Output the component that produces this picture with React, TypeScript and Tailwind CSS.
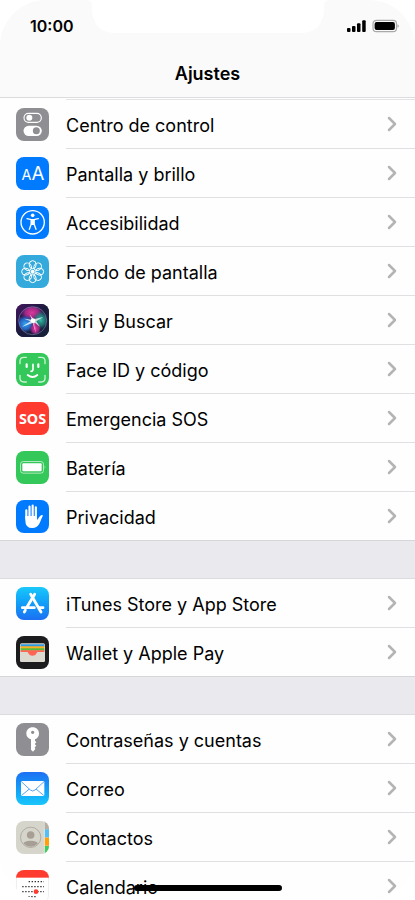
import type { ReactNode } from "react";
import { ChevronRight } from "lucide-react";

type Ajuste = {
  id: string;
  titulo: string;
  fondo: string;
  icono: ReactNode;
};

const GRUPOS: Ajuste[][] = [
  [
    { id: "centro-de-control", titulo: "Centro de control", fondo: "bg-[#8e8e93]", icono: <IconoCentro /> },
    { id: "pantalla", titulo: "Pantalla y brillo", fondo: "bg-[#007aff]", icono: <IconoPantalla /> },
    { id: "accesibilidad", titulo: "Accesibilidad", fondo: "bg-[#007aff]", icono: <IconoAccesibilidad /> },
    { id: "fondo", titulo: "Fondo de pantalla", fondo: "bg-[#34aadc]", icono: <IconoFondo /> },
    { id: "siri", titulo: "Siri y Buscar", fondo: "bg-[#1d1c3c]", icono: <IconoSiri /> },
    { id: "face-id", titulo: "Face ID y código", fondo: "bg-[#34c759]", icono: <IconoFaceId /> },
    { id: "sos", titulo: "Emergencia SOS", fondo: "bg-[#ff3b30]", icono: <IconoSos /> },
    { id: "bateria", titulo: "Batería", fondo: "bg-[#34c759]", icono: <IconoBateria /> },
    { id: "privacidad", titulo: "Privacidad", fondo: "bg-[#007aff]", icono: <IconoPrivacidad /> },
  ],
  [
    { id: "app-store", titulo: "iTunes Store y App Store", fondo: "bg-linear-to-b from-[#1ac8fb] to-[#1d6ff2]", icono: <IconoAppStore /> },
    { id: "wallet", titulo: "Wallet y Apple Pay", fondo: "bg-[#1c1c1e]", icono: <IconoWallet /> },
  ],
  [
    { id: "contrasenas", titulo: "Contraseñas y cuentas", fondo: "bg-[#8e8e93]", icono: <IconoLlave /> },
    { id: "correo", titulo: "Correo", fondo: "bg-linear-to-b from-[#1e6ff2] to-[#1ac7fb]", icono: <IconoCorreo /> },
    { id: "contactos", titulo: "Contactos", fondo: "bg-[#d5d5cb]", icono: <IconoContactos /> },
    { id: "calendario", titulo: "Calendario", fondo: "bg-white", icono: <IconoCalendario /> },
  ],
];

export default function App() {
  return (
    <div className="relative flex h-screen flex-col overflow-hidden rounded-[46px] bg-[#fefefe] font-['Inter','Liberation_Sans',sans-serif] text-black">
      <header className="relative border-b border-[#dcdcde] bg-[#fafafa]">
        <Muesca />
        <BarraEstado />
        <h1 className="flex h-[47px] items-center justify-center text-lg font-semibold">Ajustes</h1>
      </header>

      <main className="flex-1 overflow-y-auto [scrollbar-width:none]">
        {/* final de la fila anterior, bajo la cabecera */}
        <div className="ml-[66px] h-[2px] border-b border-[#e4e4e6]" />
        {GRUPOS.map((grupo, i) => (
          <section key={i}>
            {i > 0 && <div className="h-[38px] border-b border-[#dcdce0] bg-[#eae9ee]" />}
            <ul>
              {grupo.map((ajuste, j) => (
                <Fila key={ajuste.id} ajuste={ajuste} ultima={j === grupo.length - 1} />
              ))}
            </ul>
          </section>
        ))}
      </main>

      {/* indicador de inicio */}
      <div className="absolute bottom-[9px] left-1/2 h-[6px] w-[148px] -translate-x-1/2 rounded-full bg-black" />
    </div>
  );
}

function Fila({ ajuste, ultima }: { ajuste: Ajuste; ultima: boolean }) {
  return (
    <li className={ultima ? "border-b border-[#d6d6d9]" : ""}>
      <a href={`#${ajuste.id}`} className="flex items-stretch gap-[17px] pl-4">
        <span className="flex items-center">
          <span className={`block size-[33px] overflow-hidden rounded-[8px] ${ajuste.fondo}`}>{ajuste.icono}</span>
        </span>
        <span
          className={`flex flex-1 items-center justify-between pr-[11px] ${ultima ? "" : "border-b border-[#e0e0e2]"}`}
        >
          <span className="flex h-12 items-center pt-[3px] text-lg">{ajuste.titulo}</span>
          <ChevronRight size={24} strokeWidth={2.5} className="text-[#b4b4b7]" aria-hidden="true" />
        </span>
      </a>
    </li>
  );
}

function Muesca() {
  return (
    <svg
      width="244"
      height="33"
      viewBox="0 0 244 33"
      className="absolute top-0 left-1/2 -translate-x-1/2"
      aria-hidden="true"
    >
      <path d="M0 0C4 0 6 2 6 7C6 24 14 33 30 33H214C230 33 238 24 238 7C238 2 240 0 244 0Z" fill="#fff" />
    </svg>
  );
}

function BarraEstado() {
  return (
    <div className="relative flex h-[50px] items-center justify-between pt-px pr-4 pl-[30px]">
      <time className="text-base font-semibold">10:00</time>
      <svg width="52" height="14" viewBox="0 0 52 14" role="img" aria-label="Cobertura y batería">
        <rect x="0" y="9" width="3.5" height="4" rx="1" />
        <rect x="5" y="7" width="3.5" height="6" rx="1" />
        <rect x="10" y="4.2" width="3.5" height="8.8" rx="1" />
        <rect x="15.2" y="1.2" width="3.5" height="11.8" rx="1" />
        <rect x="26" y="1.3" width="23.5" height="11.4" rx="3.4" fill="none" stroke="#a9a9ab" strokeWidth="1.2" />
        <rect x="27.6" y="2.9" width="20.3" height="8.2" rx="2" />
        <path d="M50.6 5.2C52 5.6 52 8.4 50.6 8.8Z" fill="#8e8e90" />
      </svg>
    </div>
  );
}

function Lienzo({ children }: { children: ReactNode }) {
  return (
    <svg viewBox="0 0 99 99" className="size-full" fill="none" aria-hidden="true">
      {children}
    </svg>
  );
}

function IconoCentro() {
  return (
    <Lienzo>
      <rect x="24" y="16" width="52" height="27" rx="13.5" stroke="#fff" strokeWidth="3.5" />
      <circle cx="40" cy="29.5" r="9" fill="#fff" />
      <rect x="22.5" y="53" width="55" height="31" rx="15.5" fill="#fff" />
      <circle cx="61" cy="68.5" r="10.5" fill="#8e8e93" />
    </Lienzo>
  );
}

function IconoPantalla() {
  return (
    <Lienzo>
      <g fill="#fff" className="font-['Inter',sans-serif]" textAnchor="middle">
        <text x="31" y="70" fontSize="43">A</text>
        <text x="66" y="70" fontSize="56">A</text>
      </g>
    </Lienzo>
  );
}

function IconoAccesibilidad() {
  return (
    <Lienzo>
      <circle cx="50" cy="49" r="35" stroke="#fff" strokeWidth="4" />
      <circle cx="50" cy="28" r="5.5" fill="#fff" />
      <path
        d="M33 38L46 41V53L40 70M67 38L54 41V53L60 70"
        stroke="#fff"
        strokeWidth="4"
        strokeLinecap="round"
        strokeLinejoin="round"
      />
      <path d="M44 39H56V53L54 57H46L44 53Z" fill="#fff" />
    </Lienzo>
  );
}

function IconoFondo() {
  return (
    <Lienzo>
      <g stroke="#fff" strokeWidth="3">
        {[0, 45, 90, 135, 180, 225, 270, 315].map((angulo) => (
          <ellipse key={angulo} cx="50" cy="29" rx="10.5" ry="12" transform={`rotate(${angulo} 50 50)`} />
        ))}
      </g>
      <circle cx="50" cy="50" r="6" fill="#fff" />
    </Lienzo>
  );
}

function IconoSiri() {
  return (
    <Lienzo>
      <defs>
        <linearGradient id="siri-fondo" x1="0" y1="0" x2="1" y2="1">
          <stop offset="0" stopColor="#43155f" />
          <stop offset="0.5" stopColor="#1b1b3d" />
          <stop offset="1" stopColor="#172238" />
        </linearGradient>
        <radialGradient id="siri-rosa">
          <stop offset="0" stopColor="#e0399a" />
          <stop offset="0.6" stopColor="#b02b90" stopOpacity="0.85" />
          <stop offset="1" stopColor="#8a258c" stopOpacity="0" />
        </radialGradient>
        <radialGradient id="siri-azul">
          <stop offset="0" stopColor="#35a8f5" />
          <stop offset="0.6" stopColor="#2670d2" stopOpacity="0.85" />
          <stop offset="1" stopColor="#2546a0" stopOpacity="0" />
        </radialGradient>
        <radialGradient id="siri-verde">
          <stop offset="0" stopColor="#36bfa8" />
          <stop offset="0.6" stopColor="#218a80" stopOpacity="0.7" />
          <stop offset="1" stopColor="#186a68" stopOpacity="0" />
        </radialGradient>
        <clipPath id="siri-esfera">
          <circle cx="50" cy="50" r="42" />
        </clipPath>
      </defs>
      <rect width="99" height="99" fill="url(#siri-fondo)" />
      <g clipPath="url(#siri-esfera)">
        <ellipse cx="48" cy="26" rx="34" ry="24" fill="url(#siri-rosa)" />
        <ellipse cx="28" cy="60" rx="28" ry="27" fill="url(#siri-azul)" />
        <ellipse cx="74" cy="48" rx="24" ry="28" fill="url(#siri-verde)" />
        <ellipse cx="58" cy="74" rx="17" ry="20" fill="url(#siri-rosa)" />
      </g>
      <circle cx="50" cy="50" r="42" stroke="#8f9dcc" strokeOpacity="0.7" strokeWidth="2.2" />
      <path
        d="M41 31L53 46L82 39L61 52L72 68L56 56L59 86L50 57L17 69L43 52L24 44L48 47Z"
        fill="#fff"
        fillOpacity="0.75"
      />
      <path d="M52 58L60 87L57 57Z" fill="#ff4aa8" />
      <circle cx="51" cy="50" r="7" fill="#fff" />
    </Lienzo>
  );
}

function IconoFaceId() {
  return (
    <Lienzo>
      <g stroke="#fff" strokeLinecap="round">
        <path
          d="M12 32V24Q12 13 24 13H31M68 13H76Q87 13 87 24V32M87 67V76Q87 87 76 87H68M31 87H24Q12 87 12 76V67"
          strokeWidth="4"
          strokeOpacity="0.75"
        />
        <path d="M32 34V42M67 34V42" strokeWidth="6.5" />
        <path d="M51 34V49Q51 55 45 55" strokeWidth="5" />
        <path d="M35 66Q50 78 64 66" strokeWidth="5.5" />
      </g>
    </Lienzo>
  );
}

function IconoSos() {
  return (
    <Lienzo>
      <text
        x="49.5"
        y="65"
        fontSize="43"
        fontWeight="700"
        textAnchor="middle"
        fill="#fff"
        className="font-['Noto_Sans',sans-serif]"
      >
        SOS
      </text>
    </Lienzo>
  );
}

function IconoBateria() {
  return (
    <Lienzo>
      <rect x="13.5" y="31.5" width="69" height="35" rx="8" stroke="#fff" strokeOpacity="0.6" strokeWidth="3" />
      <rect x="19" y="37" width="58" height="24" rx="3" fill="#fff" />
      <path d="M86 43Q91 49 86 55Z" fill="#fff" fillOpacity="0.7" />
    </Lienzo>
  );
}

function IconoPrivacidad() {
  return (
    <Lienzo>
      <path d="M31 31V56M40.5 20V52M50 17V52M59.5 22V54" stroke="#fff" strokeWidth="6.5" strokeLinecap="round" />
      <path
        d="M28 48H63V60C67 58 70 47 77 45Q82 44 80 49C76 55 74 65 69 73Q63 84 49 84Q28 84 28 62Z"
        fill="#fff"
      />
    </Lienzo>
  );
}

function IconoAppStore() {
  return (
    <Lienzo>
      <g stroke="#fff" strokeWidth="8.5" strokeLinecap="round">
        <path d="M56 22L33 60M28 70L25 75" />
        <path d="M44 22L75 75" />
        <path d="M19 62H55M69 62H81" />
      </g>
    </Lienzo>
  );
}

function IconoWallet() {
  return (
    <Lienzo>
      <rect x="12" y="22" width="75" height="56" rx="5" fill="#dcd9d0" />
      <path d="M14 25H85V33H14Z" fill="#2f9be0" />
      <path d="M14 31H85V39H14Z" fill="#ffb01f" />
      <path d="M14 37H85V44H14Z" fill="#58bd3f" />
      <path d="M14 43H85V50H14Z" fill="#ff6455" />
      <path d="M12 48H87V73Q87 78 82 78H17Q12 78 12 73Z" fill="#dcd9d0" />
      <path d="M33 47H66C61 49 61 59 49.5 59C38 59 38 49 33 47Z" fill="#ff6455" />
    </Lienzo>
  );
}

function IconoLlave() {
  return (
    <Lienzo>
      <path
        fillRule="evenodd"
        d="M50 13C61 13 69 21 69 32C69 41 64 46 57 49V53L61 58L56 63L61 68L56 73L58 78L51 86L45 80V49C37 46 31 41 31 32C31 21 39 13 50 13ZM50 23A5 5 0 1 0 50 33A5 5 0 1 0 50 23Z"
        fill="#fff"
      />
    </Lienzo>
  );
}

function IconoCorreo() {
  return (
    <Lienzo>
      <rect x="15" y="27" width="70" height="45" rx="4" fill="#fff" />
      <path
        d="M16 29L43 54Q50 60 57 54L84 29M17 70L40 51M83 70L60 51"
        stroke="#2a91f6"
        strokeWidth="2.4"
      />
    </Lienzo>
  );
}

function IconoContactos() {
  return (
    <Lienzo>
      <rect x="84" width="15" height="25" fill="#b4aea4" />
      <rect x="86" y="25" width="13" height="24" fill="#54bff5" />
      <rect x="86" y="50" width="13" height="24" fill="#ff9f0a" />
      <rect x="86" y="75" width="13" height="24" fill="#3fcb5f" />
      <path d="M85 0V99" stroke="#f1f1ec" strokeWidth="2" />
      <clipPath id="contacto-retrato">
        <circle cx="44" cy="49" r="28" />
      </clipPath>
      <circle cx="44" cy="49" r="30.5" stroke="#a9a39a" strokeWidth="2.5" />
      <g clipPath="url(#contacto-retrato)" fill="#a79f96">
        <circle cx="44" cy="42" r="11.5" />
        <ellipse cx="44" cy="73" rx="25" ry="14" />
      </g>
    </Lienzo>
  );
}

function IconoCalendario() {
  return (
    <Lienzo>
      <rect x="1" y="1" width="97" height="97" rx="22" stroke="#e2e2e4" strokeWidth="2" />
      <rect width="99" height="23" fill="#ff3b30" />
      <g stroke="#111" strokeWidth="3.6" strokeDasharray="3.6 5.4">
        <path d="M38 35H84" />
        <path d="M19 50H84" />
        <path d="M19 65H84" />
        <path d="M28 80H64" />
      </g>
      <circle cx="60" cy="65" r="7" fill="#ff3b30" />
    </Lienzo>
  );
}
